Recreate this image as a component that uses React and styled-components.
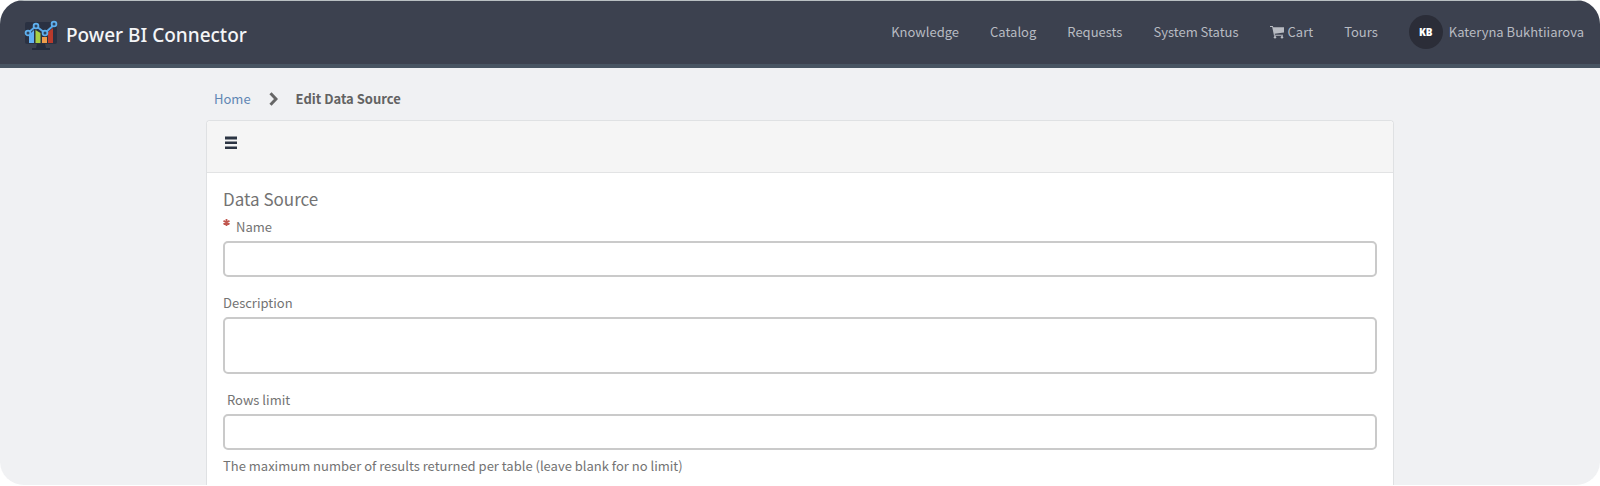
import React from "react";
import styled, { createGlobalStyle } from "styled-components";

const GlobalStyle = createGlobalStyle`
  *, *::before, *::after { box-sizing: border-box; }
  body {
    margin: 0;
    background: #fff;
    color: #737373;
    font-family: "Noto Sans CJK SC", "Open Sans", sans-serif;
    font-size: 13px;
    line-height: 20px;
  }
`;

const Page = styled.div`
  display: flex;
  flex-direction: column;
  height: 100vh;
  overflow: hidden;
  border-bottom: 1px solid #fff;
  border-radius: 24px;
  background: #f0f1f3;
`;

const Header = styled.header`
  display: flex;
  flex-shrink: 0;
  align-items: center;
  justify-content: space-between;
  height: 68px;
  padding: 0 16px 0 24px;
  border-top: 1px solid #b9bfc2;
  border-bottom: 4px solid #485462;
  background: #3c414f;
`;

const Brand = styled.a`
  display: flex;
  align-items: center;
  gap: 8px;
  padding-top: 4px;
  color: #f4f5f7;
  font-family: "Noto Sans", "Open Sans", sans-serif;
  font-size: 19px;
  font-weight: 500;
  line-height: 28px;
  text-decoration: none;
`;

const Nav = styled.nav`
  display: flex;
  align-items: center;
  gap: 31px;
  padding-bottom: 2px;
`;

const NavLink = styled.a`
  display: flex;
  align-items: center;
  gap: ${({ $gap }) => $gap || 0}px;
  color: #b8bbc2;
  text-decoration: none;
  white-space: nowrap;
`;

const Avatar = styled.span`
  display: flex;
  align-items: center;
  justify-content: center;
  width: 34px;
  height: 34px;
  border-radius: 50%;
  background: #2b2d38;
  color: #fff;
  font-family: "Open Sans", sans-serif;
  font-size: 10px;
  font-weight: 800;
`;

const Container = styled.main`
  display: flex;
  flex: 1;
  flex-direction: column;
  width: 100%;
  max-width: 1188px;
  margin: 0 auto;
`;

const Breadcrumbs = styled.nav`
  display: flex;
  align-items: center;
  gap: 18px;
  padding: 21px 8px 11px;
`;

const CrumbLink = styled.a`
  color: #6187b3;
  text-decoration: none;
`;

const CurrentCrumb = styled.span`
  color: #626262;
  font-weight: 700;
`;

const Panel = styled.section`
  flex: 1;
  border: 1px solid #dfe1e3;
  border-bottom: 0;
  border-radius: 4px 4px 0 0;
  background: #fff;
`;

const PanelHeader = styled.div`
  height: 52px;
  padding: 12px 16px;
  border-bottom: 1px solid #e2e3e4;
  border-radius: 4px 4px 0 0;
  background: #f5f5f5;
`;

const MenuButton = styled.button`
  display: flex;
  align-items: center;
  height: 20px;
  padding: 0 2px;
  border: 0;
  background: none;
  color: #2b3443;
`;

const Form = styled.form`
  display: flex;
  flex-direction: column;
  gap: 16px;
  padding: 14px 16px;
`;

const Title = styled.h1`
  margin: 0 0 -10px;
  font-size: 17px;
  font-weight: 400;
  line-height: 24px;
`;

const Field = styled.div`
  display: flex;
  flex-direction: column;
  gap: 4px;
`;

const Label = styled.label`
  display: flex;
  gap: 6px;
  padding-left: ${({ $indent }) => ($indent ? 4 : 0)}px;
`;

const TextInput = styled.input`
  width: 100%;
  height: 36px;
  padding: 6px 12px;
  border: 2px solid #cacaca;
  border-radius: 5px;
  background: #fff;
  color: inherit;
  font: inherit;
`;

const TextArea = styled.textarea`
  display: block;
  width: 100%;
  height: 57px;
  padding: 6px 12px;
  border: 2px solid #cacaca;
  border-radius: 5px;
  background: #fff;
  color: inherit;
  font: inherit;
  resize: none;
`;

const Hint = styled.p`
  margin: 2px 0 0;
`;

function Logo() {
  return (
    <svg width="34" height="32" viewBox="0 0 34 32" aria-hidden="true">
      <rect x="1" y="3" width="32" height="22" rx="2" fill="#2a3142" />
      <path d="M13 25h8l1 4h4v2H8v-2h4z" fill="#252c3d" />
      <path d="M5 16l5-5v13H5z" fill="#62b0f4" />
      <path d="M11.500 11l5 3v10h-5z" fill="#a9cf42" />
      <path d="M18 18h5v6h-5z" fill="#ef9c4b" />
      <path d="M24 13l5-4v15h-5z" fill="#b83a2c" />
      <path d="M4 14l8-7 9 7 10-9" fill="none" stroke="#5aa7e6" strokeWidth="2" />
      <g fill="#31445f" stroke="#5fb0ee" strokeWidth="1.800">
        <circle cx="4" cy="14" r="2.400" />
        <circle cx="12" cy="7" r="2.400" />
        <circle cx="21" cy="14" r="2.400" />
        <circle cx="30" cy="5" r="2.400" />
      </g>
    </svg>
  );
}

function CartIcon() {
  return (
    <svg width="14" height="14" viewBox="0 0 14 14" fill="currentColor" aria-hidden="true">
      <path d="M0 1h2.800l.5 1.300H14v5.200L4.600 8.700l.3 1.100H13v1H4L2.200 2H0z" />
      <circle cx="5" cy="12.200" r="1.200" />
      <circle cx="12" cy="12.200" r="1.200" />
    </svg>
  );
}

function ChevronIcon() {
  return (
    <svg width="9" height="14" viewBox="0 0 9 14" fill="none" aria-hidden="true">
      <path d="M1.500 1.200L7 7l-5.500 5.800" stroke="#666" strokeWidth="3" />
    </svg>
  );
}

function MenuIcon() {
  return (
    <svg width="12" height="14" viewBox="0 0 12 14" fill="currentColor" aria-hidden="true">
      <path d="M0 .5h12v3H0zM0 5.500h12v2.500H0zM0 10.500h12v2.500H0z" />
    </svg>
  );
}

function RequiredIcon() {
  return (
    <svg width="7" height="14" viewBox="0 0 7 14" aria-hidden="true">
      <path d="M3.500 2v7M.5 3.700l6 3.600M6.500 3.700l-6 3.600" stroke="#c0574f" strokeWidth="1.800" />
    </svg>
  );
}

const links = ["Knowledge", "Catalog", "Requests", "System Status"];

export default function App() {
  return (
    <>
      <GlobalStyle />
      <Page>
        <Header>
          <Brand href="#">
            <Logo />
            Power BI Connector
          </Brand>
          <Nav aria-label="Main">
            {links.map((text) => (
              <NavLink key={text} href="#">{text}</NavLink>
            ))}
            <NavLink href="#" $gap={4}><CartIcon />Cart</NavLink>
            <NavLink href="#">Tours</NavLink>
            <NavLink href="#" $gap={6}>
              <Avatar>KB</Avatar>
              Kateryna Bukhtiiarova
            </NavLink>
          </Nav>
        </Header>
        <Container>
          <Breadcrumbs aria-label="Breadcrumb">
            <CrumbLink href="#">Home</CrumbLink>
            <ChevronIcon />
            <CurrentCrumb aria-current="page">Edit Data Source</CurrentCrumb>
          </Breadcrumbs>
          <Panel>
            <PanelHeader>
              <MenuButton type="button" aria-label="Form menu"><MenuIcon /></MenuButton>
            </PanelHeader>
            <Form>
              <Title>Data Source</Title>
              <Field>
                <Label htmlFor="name"><RequiredIcon />Name</Label>
                <TextInput id="name" required />
              </Field>
              <Field>
                <Label htmlFor="description">Description</Label>
                <TextArea id="description" />
              </Field>
              <Field>
                <Label htmlFor="rows" $indent>Rows limit</Label>
                <TextInput id="rows" aria-describedby="rows-hint" />
                <Hint id="rows-hint">The maximum number of results returned per table (leave blank for no limit)</Hint>
              </Field>
            </Form>
          </Panel>
        </Container>
      </Page>
    </>
  );
}
